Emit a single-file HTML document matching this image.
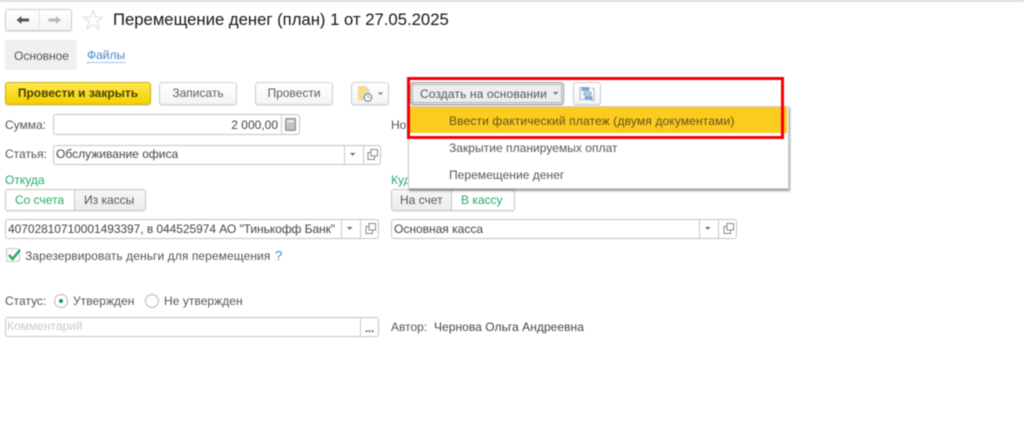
<!DOCTYPE html>
<html lang="ru">
<head>
<meta charset="utf-8">
<style>
html,body{margin:0;padding:0;background:#fff}
#p{position:relative;width:1024px;height:444px;overflow:hidden;background:#fff;font-family:"Liberation Sans",sans-serif;font-size:12px;color:#555;filter:blur(.45px)}
#p div,#p span.a,#p svg{position:absolute;box-sizing:border-box}
.t{white-space:nowrap;line-height:14px}
.btn{border:1px solid #cfcfcf;border-radius:3px;background:linear-gradient(#fff,#f4f4f4);box-shadow:0 1px 1px rgba(0,0,0,.1);text-align:center;line-height:21px;color:#5c5c5c}
.in{border:1px solid #c4c4c4;border-radius:3px;background:#fff}
.v{width:1px;background:#c8c8c8;top:0;bottom:0}
.g{color:#27ab66}
</style>
</head>
<body>
<div id="p">
<div style="left:0;top:0;width:1024px;height:2px;background:#dcdcdc"></div>

<!-- nav -->
<div style="left:5px;top:9px;width:67px;height:22px;border:1px solid #cccccc;border-radius:3px;background:linear-gradient(#fff,#f4f4f4);box-shadow:0 1px 1px rgba(0,0,0,.12)"></div>
<div style="left:39px;top:10px;width:1px;height:20px;background:#e2e2e2"></div>
<svg style="left:15px;top:14px" width="50" height="12" viewBox="0 0 50 12"><path d="M1.500 6L6.500 2V4.500H14V7.500H6.500V10Z" fill="#555"/><path d="M46 6L41 2V4.500H33.500V7.500H41V10Z" fill="#b8b8b8"/></svg>
<svg style="left:82px;top:9px" width="22" height="22" viewBox="0 0 22 22"><path d="M11 1.500L13.700 8.200H20.800L15.100 12.600L17.200 20L11 15.700L4.800 20L6.900 12.600L1.200 8.200H8.300Z" fill="#fff" stroke="#dadada" stroke-width="1"/></svg>
<div class="t" style="left:113px;top:10px;font-size:16.7px;line-height:20px;color:#161616">Перемещение денег (план) 1 от 27.05.2025</div>

<!-- tabs -->
<div style="left:5px;top:40px;width:72px;height:30px;background:#f0f0f0;border-radius:2px"></div>
<div class="t" style="left:14px;top:49px">Основное</div>
<div class="t" style="left:87px;top:48px;color:#4a86c5;border-bottom:1px dotted #4a86c5">Файлы</div>

<!-- toolbar -->
<div class="btn" style="left:5px;top:82px;width:146px;height:23px;background:linear-gradient(#ffe94d,#f5cf00);border-color:#c9ae10;color:#4a4000;font-weight:bold">Провести и закрыть</div>
<div class="btn" style="left:159px;top:82px;width:78px;height:23px">Записать</div>
<div class="btn" style="left:255px;top:82px;width:78px;height:23px">Провести</div>
<div class="btn" style="left:351px;top:82px;width:38px;height:23px"></div>
<svg style="left:358px;top:86px" width="28" height="17" viewBox="0 0 28 17"><path d="M0 0H7L11 4V14H0Z" fill="#f2dc90" stroke="#e8cf7c" stroke-width=".6"/><circle cx="10" cy="11.500" r="3.800" fill="#fff" stroke="#6d93c0" stroke-width="1.300"/><path d="M10 9V11.500H12" stroke="#c66" stroke-width=".8" fill="none"/><path d="M20 6.500H25L22.500 9Z" fill="#777"/></svg>

<div class="btn" style="left:410px;top:82px;width:154px;height:23px;border-color:#9a9a9a;background:#eeeeee"></div>
<div style="left:412px;top:84px;width:150px;height:19px;border:1px dotted #777"></div>
<div class="t" style="left:420px;top:87px;letter-spacing:.12px">Создать на основании</div>
<svg style="left:552px;top:91px" width="8" height="5" viewBox="0 0 8 5"><path d="M1 1H6.500L3.700 3.800Z" fill="#777"/></svg>
<div class="btn" style="left:573px;top:82px;width:28px;height:23px"></div>
<svg style="left:579px;top:86px" width="16" height="16" viewBox="0 0 16 16"><path d="M3.500 1.500H1V13.500H4.500M12.500 2.500H15V14.500H12" fill="none" stroke="#9dbcd4" stroke-width="1"/><rect x="3" y="1.500" width="7" height="3" fill="#85adcb" stroke="#5f8cb0" stroke-width=".6"/><rect x="5" y="6" width="7" height="3" fill="#bdd4e4" stroke="#5f8cb0" stroke-width=".6"/><rect x="6" y="10.500" width="7" height="3" fill="#85adcb" stroke="#5f8cb0" stroke-width=".6"/></svg>

<!-- Row: сумма -->
<div class="t" style="left:5px;top:118px">Сумма:</div>
<div class="in" style="left:53px;top:114px;width:247px;height:21px"><div class="v" style="left:227px"></div></div>
<div class="t" style="right:746px;top:118px;color:#444">2 000,00</div>
<svg style="left:285px;top:118px" width="12" height="13" viewBox="0 0 12 13"><rect x=".5" y=".5" width="10" height="12" rx="1" fill="#b0b0b0" stroke="#8c8c8c"/><rect x="2" y="2" width="7" height="2.500" fill="#eee"/><path d="M2 6H9M2 8H9M2 10H9" stroke="#f4f4f4" stroke-width=".9" stroke-dasharray="1.200 .8"/></svg>
<div class="t" style="left:391px;top:118px">Номер:</div>

<!-- Статья -->
<div class="t" style="left:5px;top:147px">Статья:</div>
<div class="in" style="left:53px;top:145px;width:328px;height:20px"><div class="v" style="left:290px"></div><div class="v" style="left:309px"></div></div>
<div class="t" style="left:56px;top:147px;color:#444">Обслуживание офиса</div>
<svg style="left:349px;top:152px" width="8" height="5"><path d="M1 1H6.500L3.700 3.800Z" fill="#666"/></svg>
<svg style="left:367px;top:149px" width="12" height="12" viewBox="0 0 12 12"><path d="M4 .5H10.500V7H4ZM4 3.500H1V10.500H7.500V7" fill="none" stroke="#888" stroke-width="1"/></svg>

<!-- Откуда -->
<div class="t g" style="left:5px;top:173px">Откуда</div>
<div class="in" style="left:5px;top:189px;width:141px;height:22px;box-shadow:0 1px 1px rgba(0,0,0,.06)"></div>
<div style="left:74px;top:190px;width:71px;height:20px;background:linear-gradient(#f6f6f6,#ececec);border-left:1px solid #c8c8c8;border-radius:0 2px 2px 0"></div>
<div class="t g" style="left:15px;top:193px">Со счета</div>
<div class="t" style="left:84px;top:193px">Из кассы</div>

<div class="in" style="left:5px;top:219px;width:374px;height:20px"><div class="v" style="left:335px"></div><div class="v" style="left:354px"></div></div>
<div class="t" style="left:8px;top:222px;color:#444;letter-spacing:-.06px">40702810710001493397, в 044525974 АО "Тинькофф Банк"</div>
<svg style="left:346px;top:226px" width="8" height="5"><path d="M1 1H6.500L3.700 3.800Z" fill="#666"/></svg>
<svg style="left:365px;top:223px" width="12" height="12" viewBox="0 0 12 12"><path d="M4 .5H10.500V7H4ZM4 3.500H1V10.500H7.500V7" fill="none" stroke="#888" stroke-width="1"/></svg>

<!-- Куда -->
<div class="t g" style="left:391px;top:173px">Куда</div>
<div class="in" style="left:391px;top:189px;width:124px;height:22px;box-shadow:0 1px 1px rgba(0,0,0,.06)"></div>
<div style="left:392px;top:190px;width:60px;height:20px;background:linear-gradient(#f6f6f6,#ececec);border-right:1px solid #c8c8c8;border-radius:2px 0 0 2px"></div>
<div class="t" style="left:400px;top:193px">На счет</div>
<div class="t g" style="left:461px;top:193px">В кассу</div>

<div class="in" style="left:391px;top:219px;width:346px;height:20px"><div class="v" style="left:307px"></div><div class="v" style="left:326px"></div></div>
<div class="t" style="left:394px;top:222px;color:#444">Основная касса</div>
<svg style="left:704px;top:226px" width="8" height="5"><path d="M1 1H6.500L3.700 3.800Z" fill="#666"/></svg>
<svg style="left:723px;top:223px" width="12" height="12" viewBox="0 0 12 12"><path d="M4 .5H10.500V7H4ZM4 3.500H1V10.500H7.500V7" fill="none" stroke="#888" stroke-width="1"/></svg>

<!-- checkbox -->
<div style="left:6px;top:248px;width:14px;height:14px;border:1px solid #c8c8c8;border-radius:2px;background:#f8f8f8"></div>
<svg style="left:7px;top:248px" width="15" height="14" viewBox="0 0 15 14"><path d="M2 7L5.500 11L13 2" fill="none" stroke="#1aa757" stroke-width="2.200"/></svg>
<div class="t" style="left:25px;top:249px;letter-spacing:.08px">Зарезервировать деньги для перемещения</div>
<div class="t" style="left:275px;top:249px;color:#2b8fd0;font-size:13px">?</div>

<!-- status -->
<div class="t" style="left:5px;top:294px">Статус:</div>
<div style="left:54px;top:294px;width:14px;height:14px;border:1px solid #b8b8b8;border-radius:50%;background:#fff"></div>
<div style="left:59px;top:299px;width:4px;height:4px;border-radius:50%;background:#17994f"></div>
<div class="t" style="left:73px;top:294px;letter-spacing:.05px">Утвержден</div>
<div style="left:145px;top:294px;width:14px;height:14px;border:1px solid #b8b8b8;border-radius:50%;background:#fff"></div>
<div class="t" style="left:164px;top:294px;letter-spacing:.05px">Не утвержден</div>

<!-- comment -->
<div class="in" style="left:5px;top:317px;width:374px;height:20px"><div class="v" style="left:354px"></div></div>
<div class="t" style="left:7px;top:319px;color:#cacaca">Комментарий</div>
<div class="t" style="left:365px;top:322px;color:#444;font-size:11px;font-weight:bold">...</div>
<div class="t" style="left:391px;top:320px">Автор:</div>
<div class="t" style="left:434px;top:320px;color:#444;letter-spacing:.05px">Чернова Ольга Андреевна</div>

<!-- menu -->
<div style="left:408px;top:106px;width:381px;height:83px;background:#fff;border:1px solid #cfcfcf;box-shadow:1px 2px 2px rgba(0,0,0,.4)"></div>
<div style="left:409px;top:107px;width:378px;height:26px;background:#fbcb1f"></div>
<div class="t" style="left:449px;top:114px;color:#62521a;letter-spacing:.14px">Ввести фактический платеж (двумя документами)</div>
<div class="t" style="left:449px;top:141px;letter-spacing:.04px">Закрытие планируемых оплат</div>
<div class="t" style="left:449px;top:168px;letter-spacing:.04px">Перемещение денег</div>

<!-- red highlight -->
<div style="left:407px;top:77px;width:377px;height:62px;border:3px solid #f5000a"></div>
</div>
</body>
</html>
